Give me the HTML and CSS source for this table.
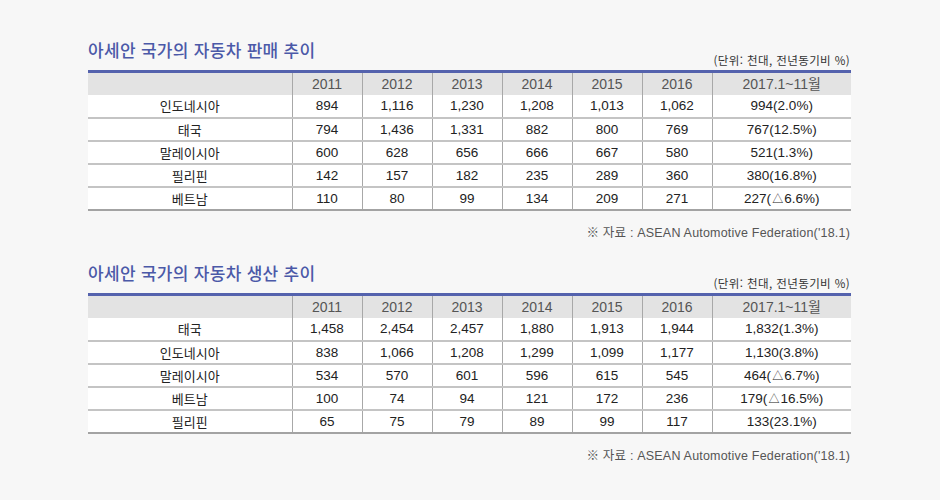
FILE: index.html
```html
<!DOCTYPE html>
<html lang="ko">
<head>
<meta charset="utf-8">
<link rel="stylesheet" href="styles.css">
</head>
<body>
<div class="page">
  <section class="block">
    <div class="head">
      <h2 class="title">아세안 국가의 자동차 판매 추이</h2>
      <span class="unit">(단위: 천대, 전년동기비 %)</span>
    </div>
    <table class="tbl">
      <colgroup><col class="c0"><col class="cy"><col class="cy"><col class="cy"><col class="cy"><col class="cy"><col class="cy"><col class="cl"></colgroup>
      <thead><tr><th></th><th>2011</th><th>2012</th><th>2013</th><th>2014</th><th>2015</th><th>2016</th><th>2017.1~11월</th></tr></thead>
      <tbody>
        <tr><td>인도네시아</td><td>894</td><td>1,116</td><td>1,230</td><td>1,208</td><td>1,013</td><td>1,062</td><td>994(2.0%)</td></tr>
        <tr><td>태국</td><td>794</td><td>1,436</td><td>1,331</td><td>882</td><td>800</td><td>769</td><td>767(12.5%)</td></tr>
        <tr><td>말레이시아</td><td>600</td><td>628</td><td>656</td><td>666</td><td>667</td><td>580</td><td>521(1.3%)</td></tr>
        <tr><td>필리핀</td><td>142</td><td>157</td><td>182</td><td>235</td><td>289</td><td>360</td><td>380(16.8%)</td></tr>
        <tr><td>베트남</td><td>110</td><td>80</td><td>99</td><td>134</td><td>209</td><td>271</td><td>227(<span class="tri">△</span>6.6%)</td></tr>
      </tbody>
    </table>
    <p class="src">※ 자료 : ASEAN Automotive Federation('18.1)</p>
  </section>
  <section class="block">
    <div class="head">
      <h2 class="title">아세안 국가의 자동차 생산 추이</h2>
      <span class="unit">(단위: 천대, 전년동기비 %)</span>
    </div>
    <table class="tbl">
      <colgroup><col class="c0"><col class="cy"><col class="cy"><col class="cy"><col class="cy"><col class="cy"><col class="cy"><col class="cl"></colgroup>
      <thead><tr><th></th><th>2011</th><th>2012</th><th>2013</th><th>2014</th><th>2015</th><th>2016</th><th>2017.1~11월</th></tr></thead>
      <tbody>
        <tr><td>태국</td><td>1,458</td><td>2,454</td><td>2,457</td><td>1,880</td><td>1,913</td><td>1,944</td><td>1,832(1.3%)</td></tr>
        <tr><td>인도네시아</td><td>838</td><td>1,066</td><td>1,208</td><td>1,299</td><td>1,099</td><td>1,177</td><td>1,130(3.8%)</td></tr>
        <tr><td>말레이시아</td><td>534</td><td>570</td><td>601</td><td>596</td><td>615</td><td>545</td><td>464(<span class="tri">△</span>6.7%)</td></tr>
        <tr><td>베트남</td><td>100</td><td>74</td><td>94</td><td>121</td><td>172</td><td>236</td><td>179(<span class="tri">△</span>16.5%)</td></tr>
        <tr><td>필리핀</td><td>65</td><td>75</td><td>79</td><td>89</td><td>99</td><td>117</td><td>133(23.1%)</td></tr>
      </tbody>
    </table>
    <p class="src">※ 자료 : ASEAN Automotive Federation('18.1)</p>
  </section>
</div>
</body>
</html>
```
FILE: styles.css
```css
html, body {
  margin: 0;
  padding: 0;
  background: #f7f7f7;
}
body {
  font-family: "Liberation Sans", "Noto Sans CJK KR", sans-serif;
  color: #222;
  width: 940px;
  height: 500px;
  overflow: hidden;
}
.page {
  padding: 39px 89px 0 88px;
  display: flex;
  flex-direction: column;
  gap: 21px;
}
.head {
  display: flex;
  justify-content: space-between;
  align-items: flex-end;
  height: 31px;
}
.title {
  margin: -1px 0 0;
  font-family: "Noto Sans CJK KR", sans-serif;
  font-size: 17px;
  font-weight: 500;
  color: #4b59a8;
  line-height: 24px;
  align-self: flex-start;
  letter-spacing: 0.3px;
}
.unit {
  font-family: "Noto Sans CJK KR", sans-serif;
  font-size: 11.5px;
  letter-spacing: 0.4px;
  color: #333;
  line-height: 14px;
  padding-bottom: 3px;
  padding-right: 1px;
}
.tbl {
  width: 763px;
  border-collapse: collapse;
  table-layout: fixed;
  border-top: 3px solid #5462ad;
  border-bottom: 2px solid #a3a3a3;
  font-size: 13.5px;
  line-height: 16px;
}
.c0 { width: 204px; }
.cy { width: 70px; }
.cl { width: 139px; }
.tbl th {
  background: #e3e3e3;
  font-weight: normal;
  color: #555;
  height: 22px;
  padding: 0;
  font-size: 14px;
  text-align: center;
  border-left: 1px solid #a8a8a8;
}
.tbl th:first-child { border-left: none; }
.tbl td {
  background: #fff;
  height: 21px;
  padding: 0;
  text-align: center;
  border-left: 1px solid #a8a8a8;
  border-top: 2px solid #c4c4c4;
  color: #222;
}
.tbl tbody tr:first-child td { border-top: none; height: 22px; }
.tbl td:first-child {
  border-left: none;
  font-family: "Noto Sans CJK KR", sans-serif;
  font-size: 13px;
}
.tri {
  font-family: "Noto Sans CJK KR", sans-serif;
  font-size: 11px;
  line-height: 1;
  margin: 0 1px;
}
.src {
  margin: 11px 1px 0 0;
  text-align: right;
  font-size: 12.5px;
  letter-spacing: 0.2px;
  color: #555;
  font-family: "Liberation Sans", "Noto Sans CJK KR", sans-serif;
}
```
